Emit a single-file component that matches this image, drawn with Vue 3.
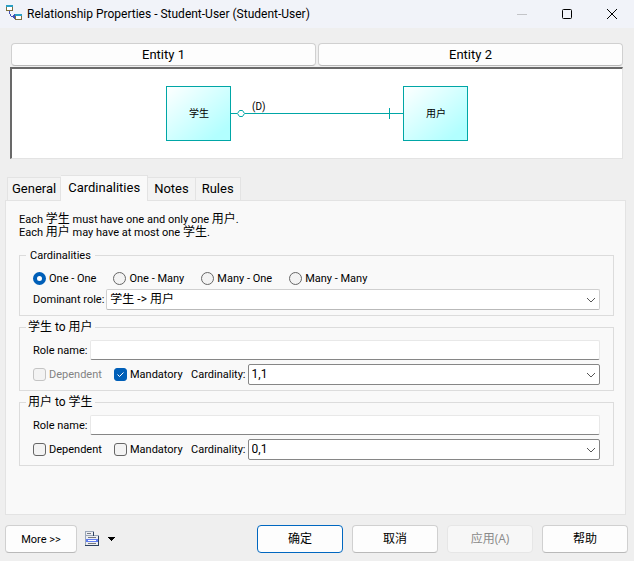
<script setup>
import { ref, reactive } from 'vue'

const tabs = ['General', 'Cardinalities', 'Notes', 'Rules']
const activeTab = ref('Cardinalities')

const kinds = ['One - One', 'One - Many', 'Many - One', 'Many - Many']
const kind = ref('One - One')

const dominant = ref('学生 -> 用户')

const roles = reactive([
  { id: 'a', title: '学生 to 用户', name: '', dependent: false, locked: true, mandatory: true, cardinality: '1,1' },
  { id: 'b', title: '用户 to 学生', name: '', dependent: false, locked: false, mandatory: false, cardinality: '0,1' }
])
</script>

<template>
  <div class="dialog">
    <header class="titlebar">
      <svg class="app-icon" width="16" height="18" viewBox="0 0 16 18" shape-rendering="crispEdges" aria-hidden="true">
        <rect x="0.5" y="0.5" width="6" height="5" fill="#fff" stroke="#7f7040" />
        <rect x="0" y="0" width="7" height="2" fill="#2a9fc4" />
        <path d="M3.5 6v3M4.500 9v2M5 11.500h4M7.500 10v3M8.500 9v5" fill="none" stroke="#4350b8" />
        <rect x="9.5" y="9.5" width="6" height="5" fill="#fff" stroke="#7f7040" />
        <rect x="9" y="9" width="7" height="2" fill="#2a9fc4" />
      </svg>
      <h1 class="title">Relationship Properties - Student-User (Student-User)</h1>
      <div class="window-buttons">
        <button type="button" aria-label="Minimize" disabled>
          <svg width="12" height="12" viewBox="0 0 12 12"><path d="M1 6.5h10" stroke="#c3c4c8" /></svg>
        </button>
        <button type="button" aria-label="Maximize">
          <svg width="12" height="12" viewBox="0 0 12 12"><rect x="1.5" y="1.5" width="9" height="9" rx="1" fill="none" stroke="#000" /></svg>
        </button>
        <button type="button" aria-label="Close">
          <svg width="12" height="12" viewBox="0 0 12 12"><path d="M1 1l10 10M11 1L1 11" stroke="#000" /></svg>
        </button>
      </div>
    </header>

    <section class="entities">
      <div class="entity-buttons">
        <button type="button" class="btn">Entity 1</button>
        <button type="button" class="btn">Entity 2</button>
      </div>
      <div class="canvas">
        <svg width="304" height="57" viewBox="0 0 304 57">
          <defs>
            <linearGradient id="fill" x1="0" y1="0" x2="1" y2="1">
              <stop offset="0" stop-color="#fff" />
              <stop offset="0.85" stop-color="#b2ffff" />
            </linearGradient>
          </defs>
          <g fill="none" stroke="#00a6a6">
            <rect x="1.5" y="1.5" width="64" height="54" fill="url(#fill)" />
            <rect x="238.5" y="1.5" width="64" height="54" fill="url(#fill)" />
            <path d="M66 28.5h6M80 28.5h158M224.5 23v11" />
            <path d="M72.5 28.5l2-3h3l2 3l-2 3h-3z" />
          </g>
          <text x="34" y="32" text-anchor="middle">学生</text>
          <text x="271" y="32" text-anchor="middle">用户</text>
          <text x="87" y="25">(D)</text>
        </svg>
      </div>
    </section>

    <nav class="tabs" role="tablist">
      <button
        v-for="t in tabs"
        :key="t"
        type="button"
        role="tab"
        class="tab"
        :class="{ active: t === activeTab }"
        :aria-selected="t === activeTab"
        @click="activeTab = t"
      >{{ t }}</button>
    </nav>

    <main class="panel">
      <p class="summary">
        Each <b>学生</b> must have one and only one <b>用户</b>.<br />
        Each <b>用户</b> may have at most one <b>学生</b>.
      </p>

      <fieldset class="group">
        <legend>Cardinalities</legend>
        <div class="kinds">
          <label v-for="k in kinds" :key="k" class="choice">
            <input v-model="kind" type="radio" name="kind" :value="k" />{{ k }}
          </label>
        </div>
        <div class="row">
          <label for="dominant">Dominant role:</label>
          <select id="dominant" v-model="dominant" class="select soft">
            <option>学生 -&gt; 用户</option>
            <option>用户 -&gt; 学生</option>
          </select>
        </div>
      </fieldset>

      <fieldset v-for="r in roles" :key="r.id" class="group role">
        <legend>{{ r.title }}</legend>
        <div class="row">
          <label :for="'name-' + r.id">Role name:</label>
          <input :id="'name-' + r.id" v-model="r.name" type="text" class="text" />
        </div>
        <div class="options">
          <label class="choice" :class="{ locked: r.locked }">
            <input v-model="r.dependent" type="checkbox" :disabled="r.locked" />Dependent
          </label>
          <label class="choice">
            <input v-model="r.mandatory" type="checkbox" />Mandatory
          </label>
          <div class="row">
            <label :for="'card-' + r.id">Cardinality:</label>
            <select :id="'card-' + r.id" v-model="r.cardinality" class="select">
              <option>0,1</option>
              <option>1,1</option>
            </select>
          </div>
        </div>
      </fieldset>
    </main>

    <footer class="footer">
      <button type="button" class="btn more">More &gt;&gt;</button>
      <button type="button" class="menu" aria-label="Report">
        <svg width="32" height="16" viewBox="0 0 32 16" shape-rendering="crispEdges">
          <path d="M0 0h9v4h5v11H0z" fill="#eceef2" />
          <path d="M0 0.5h9M0.5 0v15M1 4.5h13" stroke="#9aa7b8" />
          <path d="M0 14.5h14M13.5 5v10M8.5 1v4" stroke="#2c405f" />
          <path d="M2 2.5h4M3 6.5h8M3 12.5h8" stroke="#76797f" />
          <rect x="1" y="8" width="12" height="3" fill="#5f7cf0" />
          <path d="M3 9.5h8" stroke="#fff" />
          <path d="M23 6h7v1h-1v1h-1v1h-1v1h-1v-1h-1v-1h-1v-1h-1z" fill="#000" />
        </svg>
      </button>
      <div class="actions">
        <button type="button" class="btn primary">确定</button>
        <button type="button" class="btn">取消</button>
        <button type="button" class="btn" disabled>应用(A)</button>
        <button type="button" class="btn">帮助</button>
      </div>
    </footer>
  </div>
</template>

<style>
body {
  background: #efefef;
}
</style>

<style scoped>
.dialog {
  box-sizing: border-box;
  min-height: 100vh;
  display: flex;
  flex-direction: column;
  background: #efefef;
  color: #000;
  font: 11px/13px Roboto, "Noto Sans CJK SC", sans-serif;
}

button,
input,
select {
  font: inherit;
  color: inherit;
  margin: 0;
  box-sizing: border-box;
}

.titlebar {
  display: flex;
  align-items: center;
  height: 28px;
  padding-left: 6px;
  gap: 5px;
  background: #f1f3f9;
}

.title {
  flex: 1;
  margin: 0;
  font: 12px/16px Roboto, sans-serif;
  white-space: nowrap;
}

.window-buttons {
  display: flex;
}

.window-buttons button {
  width: 45px;
  height: 26px;
  padding: 0;
  border: 0;
  background: none;
  display: flex;
  align-items: center;
  justify-content: center;
}

.entities {
  padding: 15px 11px 0 10px;
}

.entity-buttons {
  display: flex;
  gap: 2px;
  padding: 0 0 1px 1px;
}

.btn {
  border: 1px solid #d0d0d0;
  border-bottom-color: #b9b9b9;
  border-radius: 4px;
  background: #fdfdfd;
  padding: 0;
}

.entity-buttons .btn {
  flex: 1;
  height: 23px;
  font: 13px/16px Roboto, sans-serif;
}

.canvas {
  display: flex;
  justify-content: center;
  padding: 16px 0;
  background: #fff;
  border-style: solid;
  border-width: 2px 1px 1px 2px;
  border-color: #696969 #e3e3e3 #e3e3e3 #696969;
}

.canvas text {
  font: 10px Roboto, "Noto Sans CJK SC", sans-serif;
}

.tabs {
  display: flex;
  align-items: flex-end;
  padding: 16px 7px 0;
}

.tab {
  height: 23px;
  padding: 0 6px;
  border: 1px solid #e3e3e3;
  border-width: 1px 1px 0 0;
  background: #f3f3f3;
  font: 13px/16px Roboto, sans-serif;
}

.tab:first-child {
  border-left-width: 1px;
  padding: 0 4px;
}

.tab.active {
  height: 26px;
  margin-bottom: -1px;
  padding: 0 7px 2px;
  background: #f9f9f9;
  position: relative;
}

.panel {
  flex: 1;
  margin: 0 8px 0 5px;
  padding: 12px 11px 0 13px;
  border: 1px solid #e3e3e3;
  background: #f9f9f9;
}

.summary {
  margin: 0 0 10px;
}

.summary b {
  font-size: 12px;
  font-weight: 400;
  line-height: 1;
}

.group {
  min-width: 0;
  margin: 0 0 5px;
  padding: 10px 13px 5px;
  border: 1px solid #dcdcdc;
}

.group legend {
  margin-left: -7px;
  padding: 0 4px;
  height: 13px;
}

.group.role {
  padding-top: 6px;
}

.role legend {
  padding: 0 2px;
  font-size: 12px;
}

.kinds {
  display: flex;
  gap: 17px;
  margin-bottom: 4px;
}

.choice {
  display: flex;
  align-items: center;
  gap: 3px;
  white-space: nowrap;
}

.choice input {
  appearance: none;
  flex: none;
  width: 13px;
  height: 13px;
  border: 1px solid #666;
  background: #f3f3f3;
}

.choice input[type="radio"] {
  border-radius: 50%;
}

.choice input[type="radio"]:checked {
  border: 4px solid #005fb8;
  background: #fff;
}

.choice input[type="checkbox"] {
  border-radius: 3px;
}

.choice input[type="checkbox"]:checked {
  border-color: #005fb8;
  background: #005fb8 url("data:image/svg+xml,%3Csvg xmlns='http://www.w3.org/2000/svg' viewBox='0 0 11 11'%3E%3Cpath d='M2.5 5.5l2 2l4-4' fill='none' stroke='white'/%3E%3C/svg%3E") center / 11px 11px no-repeat;
}

.choice input:disabled {
  border-color: #c4c4c4;
}

.choice.locked {
  color: #838383;
}

.row {
  display: flex;
  align-items: center;
  gap: 2px;
  min-width: 0;
}

.row > label {
  flex: none;
}

.select {
  appearance: none;
  flex: 1;
  min-width: 0;
  height: 21px;
  padding: 0 3px;
  border: 1px solid #868686;
  border-radius: 2px;
  background: #fff url("data:image/svg+xml,%3Csvg xmlns='http://www.w3.org/2000/svg' viewBox='0 0 10 6'%3E%3Cpath d='M1 1l4 4l4-4' fill='none' stroke='%23555'/%3E%3C/svg%3E") right 3px center / 10px 6px no-repeat;
  font-size: 12px;
}

.select.soft {
  border-color: #d0d0d0;
  border-bottom-color: #b9b9b9;
}

.text {
  flex: 1;
  min-width: 0;
  height: 20px;
  border: 1px solid #e8e8e8;
  border-bottom-color: #868686;
  border-radius: 2px;
  background: #fff;
}

.options {
  display: grid;
  grid-template-columns: 81px 77px 1fr;
  align-items: center;
  margin-top: 4px;
}

.footer {
  display: flex;
  align-items: center;
  padding: 10px 6px 8px 5px;
}

.footer .btn {
  height: 28px;
}

.footer .more {
  width: 72px;
}

.menu {
  padding: 0;
  margin-left: 8px;
  border: 0;
  background: none;
  display: flex;
}

.actions {
  display: flex;
  gap: 9px;
  margin-left: auto;
}

.actions .btn {
  width: 86px;
  font: 12px/16px "Open Sans", "Noto Sans CJK SC", sans-serif;
}

.actions .primary {
  border-color: #0067c0;
}

.actions .btn:disabled {
  color: #8a8a8a;
  background: #f7f7f7;
  border-color: #e6e6e6;
}
</style>
